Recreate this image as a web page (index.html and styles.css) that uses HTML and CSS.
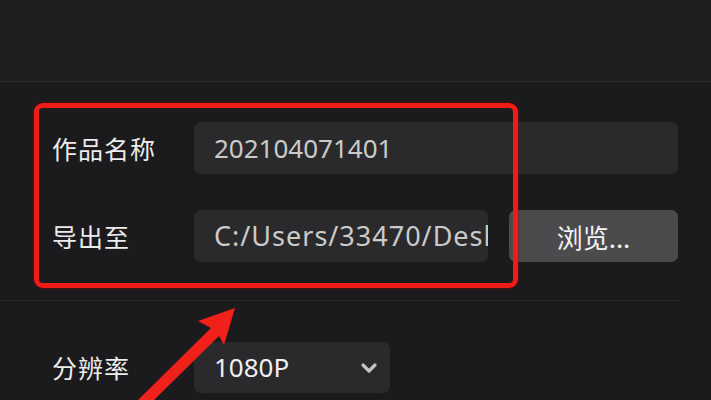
FILE: index.html
```html
<!DOCTYPE html>
<html lang="zh-CN">

<head>
    <meta charset="UTF-8">
    <meta name="viewport" content="width=device-width, initial-scale=1.0">
    <title>导出设置</title>
    <link rel="stylesheet" href="styles.css">
</head>

<body>
    <!-- Top bar (empty in this view) -->
    <div class="top-bar"></div>

    <div class="export-form">
        <!-- Highlighted group: name + path -->
        <div class="marked-group">
            <div class="form-row">
                <span class="field-label">作品名称</span>
                <div class="text-field">202104071401</div>
            </div>
            <div class="form-row path-row">
                <span class="field-label">导出至</span>
                <div class="text-field path-field">C:/Users/33470/Desk</div>
                <button class="browse-button">浏览...</button>
            </div>
            <div class="red-mark"></div>
        </div>

        <div class="divider"></div>

        <div class="form-row">
            <span class="field-label">分辨率</span>
            <div class="select-field">
                <span>1080P</span>
                <svg class="chevron" width="18" height="12" viewBox="0 0 18 12">
                    <polyline points="3,3 9,9 15,3" fill="none" stroke="#c4c4c4" stroke-width="3.2" stroke-linecap="round" stroke-linejoin="round" />
                </svg>
            </div>
        </div>
    </div>

    <!-- Red arrow annotation -->
    <svg class="red-arrow" width="711" height="400" viewBox="0 0 711 400">
        <polygon points="235,308 198,321 211,328 138,400 154,400 219,336 224,345" fill="#f0201a" />
    </svg>
</body>

</html>
```

FILE: styles.css
```css
body {
    margin: 0;
    padding: 0;
    background-color: #1b1b1d;
    font-family: "Noto Sans", "Noto Sans CJK SC", sans-serif;
    color: #e6e6e6;
    height: 400px;
    overflow: hidden;
    position: relative;
}

.top-bar {
    height: 81px;
    background-color: #1f1f21;
    border-bottom: 1px solid #2c2c2e;
}

.export-form {
    padding: 40px 33px 0 52px;
}

.marked-group {
    position: relative;
}

.form-row {
    display: flex;
    align-items: center;
    height: 52px;
}

.path-row {
    margin-top: 36px;
}

.field-label {
    width: 142px;
    flex-shrink: 0;
    font-family: "Noto Sans CJK SC", sans-serif;
    font-size: 25px;
    color: #ececec;
    letter-spacing: 1px;
}

.text-field {
    flex: 1;
    height: 52px;
    line-height: 52px;
    padding: 0 20px;
    background-color: #2a2a2c;
    border-radius: 7px;
    font-size: 26px;
    color: #cacaca;
    white-space: nowrap;
    overflow: hidden;
}

.path-field {
    flex: none;
    width: 274px;
    padding-right: 0;
    font-size: 27px;
    letter-spacing: 1px;
}

.browse-button {
    margin-left: 21px;
    flex: 1;
    height: 52px;
    background-color: #4b4b4e;
    border: none;
    border-radius: 7px;
    font-family: "Noto Sans CJK SC", sans-serif;
    font-size: 26px;
    color: #f2f2f2;
    padding: 0;
}

/* Red annotation box over the first two rows */
.red-mark {
    position: absolute;
    left: -18px;
    top: -19px;
    width: 474px;
    height: 175px;
    border: 5px solid #f01c16;
    border-radius: 9px;
    box-shadow: 0 0 3px rgba(160, 0, 0, 0.8);
}

.divider {
    height: 1px;
    margin: 38px -2px 40px -52px;
    background-color: #29292b;
}

.select-field {
    width: 196px;
    height: 51px;
    box-sizing: border-box;
    padding: 0 12px 0 20px;
    background-color: #2a2a2c;
    border-radius: 7px;
    display: flex;
    align-items: center;
    justify-content: space-between;
    font-size: 26px;
    color: #f0f0f0;
}

.chevron {
    margin-top: 2px;
}

.red-arrow {
    position: absolute;
    left: 0;
    top: 0;
    pointer-events: none;
}
```
